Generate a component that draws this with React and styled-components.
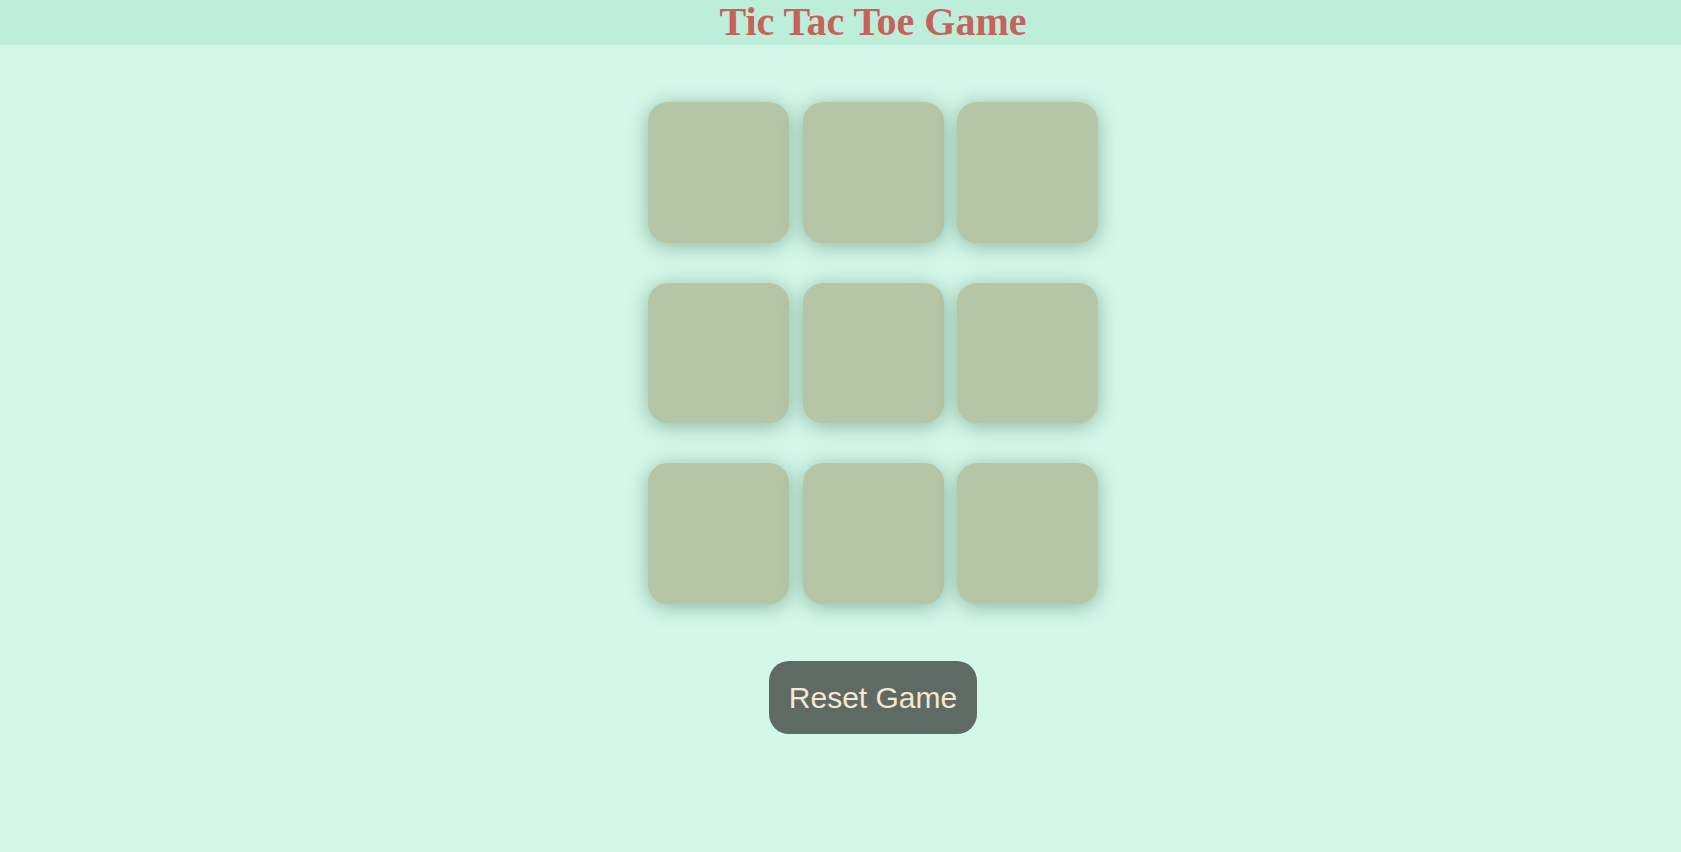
import React, { useState } from "react";
import styled, { createGlobalStyle } from "styled-components";

const GlobalStyle = createGlobalStyle`
  html, body {
    margin: 0;
    padding: 0;
    background: #d4f8e8;
  }
  body {
    font-family: "Liberation Serif", "Times New Roman", serif;
  }
`;

const Page = styled.div`
  min-height: 852px;
  background: #d4f8e8;
  display: flex;
  flex-direction: column;
`;

const Header = styled.header`
  height: 45px;
  background: #bdeed9;
  padding-left: 65px;
  display: flex;
  justify-content: center;
  align-items: flex-start;
`;

const Title = styled.h1`
  margin: 0;
  font-family: "Liberation Serif", "Times New Roman", serif;
  font-weight: 700;
  font-size: 40px;
  line-height: 43px;
  color: #c5625a;
`;

const Main = styled.main`
  padding-left: 65px;
  padding-top: 57px;
  display: flex;
  flex-direction: column;
  align-items: center;
`;

const Board = styled.div`
  display: grid;
  grid-template-columns: repeat(3, 141px);
  grid-auto-rows: 140.5px;
  column-gap: 13.5px;
  row-gap: 40px;
`;

const Cell = styled.button`
  border: none;
  padding: 0;
  border-radius: 20px;
  background: #b4c6a3;
  box-shadow: 0 3px 20px rgba(40, 90, 75, 0.42);
  font-family: "Liberation Sans", Arial, sans-serif;
  font-size: 60px;
  color: #5e6b62;
  cursor: pointer;
`;

const ResetButton = styled.button`
  margin-top: 57px;
  border: none;
  border-radius: 20px;
  background: #5e6b62;
  color: #f7e6d2;
  font-family: "Liberation Sans", Arial, sans-serif;
  font-size: 30px;
  line-height: 35px;
  padding: 19px 20px;
  cursor: pointer;
`;

export default function App() {
  const [cells, setCells] = useState(Array(9).fill(""));
  const [turn, setTurn] = useState("X");

  const play = (i) => {
    if (cells[i]) return;
    const next = cells.slice();
    next[i] = turn;
    setCells(next);
    setTurn(turn === "X" ? "O" : "X");
  };

  const reset = () => {
    setCells(Array(9).fill(""));
    setTurn("X");
  };

  return (
    <>
      <GlobalStyle />
      <Page>
        <Header>
          <Title>Tic Tac Toe Game</Title>
        </Header>
        <Main>
          <Board>
            {cells.map((c, i) => (
              <Cell key={i} onClick={() => play(i)}>
                {c}
              </Cell>
            ))}
          </Board>
          <ResetButton onClick={reset}>Reset Game</ResetButton>
        </Main>
      </Page>
    </>
  );
}
